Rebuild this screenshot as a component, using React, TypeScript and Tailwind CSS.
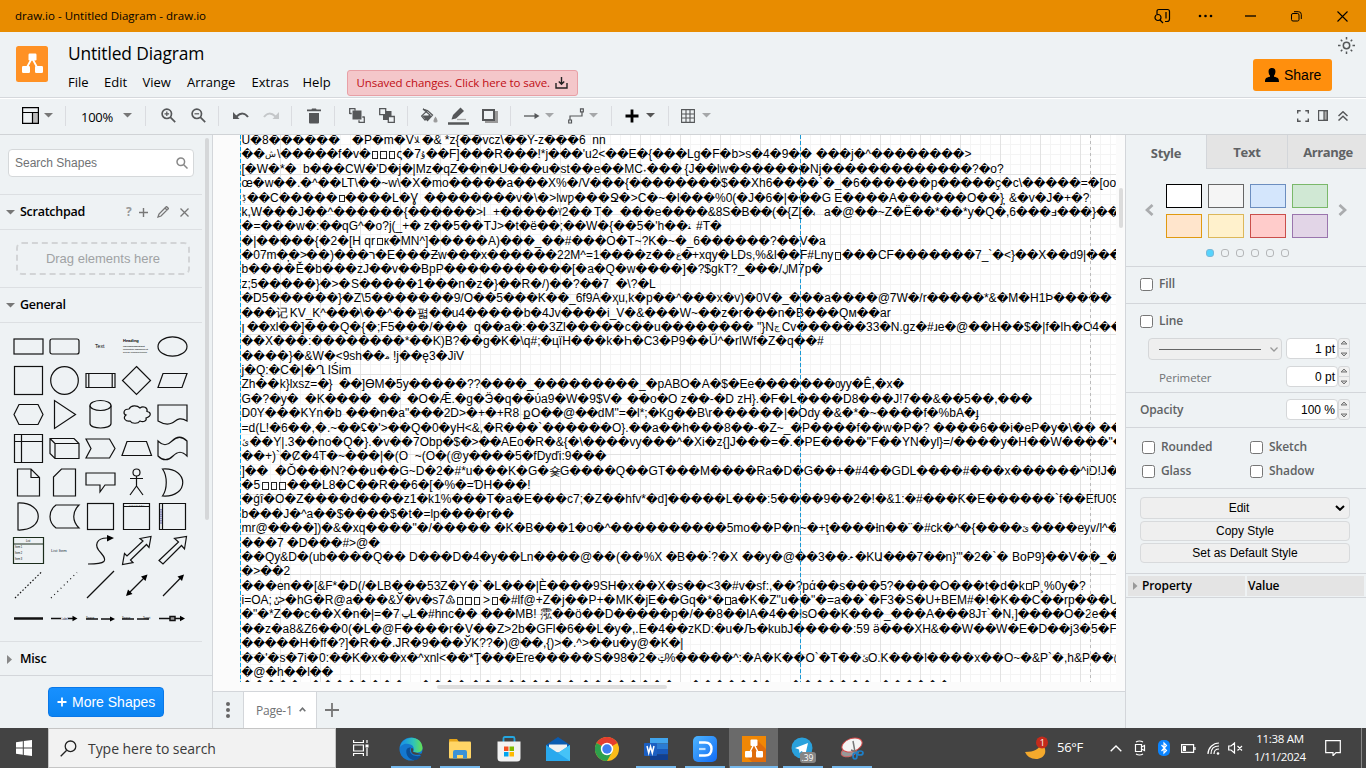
import React from "react";

const ui = "font-['Open_Sans','Noto_Sans',sans-serif]";
const arial = "font-['Liberation_Sans',Arial,sans-serif]";

/*
 * Label text of the imported binary shape. Each line is a list of segments
 * separated by "‖", every segment being "x¦text". "§" plus a letter stands for
 * a run of replacement characters (a = 1, b = 2, ...).
 */
const LINES: string[] = [
  "241.5¦U§a8§f‖352¦§aP§am§aV‖414¦ﻼ‖422¦§a& *z{§bvcz\\§b‖527¦Y-z§c6  nn",
  "241.5¦§b‖265¦ش‖277¦\\§ef§av§a‖370.5¦□□□‖396.5¦ς§a7‖421¦ۇ‖426¦§b‖449¦F]§cR§c!*j§c'‖585¦u2<§bE§a{§c‖687¦Lg§aF§ab>s§a4§a9§b‖816¦§c‖851¦j§a^§h>",
  "241.5¦[§aW§a*§a ‖303¦b§c‖345¦CW§a'D§aj§a|‖415.7¦Mz§aqZ§bn§aU§c‖542¦u§ast§be§bMC˖§c‖684.5¦{J§b‖717¦lw§g‖810¦Nj§m‖972¦?§ao?",
  "241.5¦œ§aw§b.§a^§bLT\\§b~w\\§aX§a‖432¦mo§ea§c‖548¦X%§a/V§c‖625¦{§h‖721¦$§b‖751¦Xh6§d‖819¦`§a_§a‖853¦6§f‖930.7¦p§e‖995¦ҫ§ac\\§e‖1080.7¦=§a[oo",
  "241.5¦ڋ‖247¦§b‖270¦C§e‖337.5¦□‖345¦§d‖392¦L§aƔ‖424¦§h‖516¦v§a\\§a>lwƿ§cՋ§a‖630.7¦>C§a~§al§c‖715¦%0(§aJ§a6§a|§c‖821.7¦G E§d‖889¦A§f‖967¦O§b}̦ ‖1009¦&§av§aJ§a+§a?",
  "241.5¦k,W§c‖298¦J§b^§f‖403.7¦{§f‖476¦>l‖493¦+§e‖558¦ᵞ2§b‖594¦T§a ‖620¦§ce§d‖707.7¦&8S§aB§b(§a{Z[§a‖813¦ﺑ‖824¦a§a@§b~Z§aË§b*§b‖963¦*y§aQ§a‖1006¦,6§cⅎ§c}§b",
  "241.5¦§a=§c‖296¦w§a:§b‖342¦qG^§ao?j(_+§a‖423.7¦z§b5§b‖483.7¦TJ>§at§aë§b;§b‖586¦W§a{§b5§a'h§b‖688¦ﻨ‖696¦#T§a",
  "241.5¦§a|§e‖314.7¦{§a2§a‖349¦[H qr‖375.7¦□‖383.7¦к§aMN^]§e‖488¦A)§c_§b#§cO§aT~?K§a‖668¦~§a‖686.7¦_6§f‖770¦?§bV§a‖819¦a",
  "241.5¦§a07m§a̦§a‖300¦>‖306¦§b‖330¦)§cר§a‖387¦E§c‖430.7¦Ƶw§c‖481¦x§f‖557¦22M^=1§d‖645.7¦z§b‖675.7¦ع‖681¦§a‖692¦+xqу§a‖730.7¦LDs,%&l§b‖800¦F#Lny‖834¦□‖842¦§c‖878¦CF§g‖975¦7_`§a‖1004¦<}§bX§bd9|§c",
  "241.5¦b§d‖295.7¦Ě§ab§c‖357¦zJ§bv§b‖421¦BpP§k‖572¦[§aa§aQ§aw§d]‖686¦§a‖697.7¦?$gkT?_§c/‖782¦ڸ‖788¦M7p§a",
  "241.5¦z;5§e‖315.7¦}§a>§a‖351¦S§e‖417¦1§cn§az§a‖494¦}§bR§a/)§b‖573¦?§b7  ‖615.7¦§a\\?§aL",
  "241.5¦§aD5§f‖338¦}§aZ\\5§g‖453.7¦9/O§b5§cK§b‖569¦_6f9A§aҳu,k§a‖646¦p§b^§c‖716.7¦x§av)§a‖756¦0V§a_§ca§d‖877.7¦@7W§a/r§e‖984¦*&§aM§aH1Þ§e",
  "241.5¦§c‖276¦记‖289.7¦KV_K^§c‖360¦\\§b^§b‖417¦펿‖429¦§a‖441¦§a‖451.7¦u4§e‖523.7¦b§a4Jv§d‖607¦i_V§a&§cW‖691¦~§bz§ar§cn§a‖796¦B§cQм§bar",
  "241.5¦ן‖247¦§bxl§b‖301¦]§cQ§a{§a‖377¦;F5§c/§c  ‖474¦q§ba§a:§b‖549¦3Zl§e‖624.7¦c§bu§h ‖757¦\"}N‖774¦ج‖781.7¦Cv§f‖866¦33§aN.gz§a#ɹe§a‖956¦@§bH§b$§a|f§alҺ§a‖1083¦O4§b",
  "241.5¦§bX§c‖308¦:§h‖404.7¦*§bK)B?§b‖483¦g§aK§a\\q#;§a‖552¦цïH§ck§aҺ§aC3§aP9§b‖709¦Ű^§arlWf§aZ§aq§b#",
  "241.5¦§d}§a&W§a‖335.7¦<9sh§b‖384.7¦ﻣ‖393¦!j§bę3§aJiV",
  "241.5¦j§aQ:§aC§a|§aՂ ‖328¦lŚim",
  "241.5¦Zh§b‖279.7¦k}lxsz=§a}  ‖339¦§b]ӨM§a‖396¦5у§e‖467¦??§d‖527¦_§i‖639¦_§apABO§a‖701.7¦A§a$§aEe§g‖835¦ѹy§aÊ,§ax§a",
  "241.5¦G§a?§ay§a  ‖305¦§aK§d  ‖378¦§b  ‖407¦§aO§aǢ.§ag§aӬ§aq§bύa9§a‖566¦W§a9$V§a ‖627¦§bo§aO z§b-§aD zH}.§a‖770.7¦F§aL§dD8§cJ!7§b‖932.7¦&§b5§b,§c",
  "241.5¦D0Y§cKYn§ab ‖345.7¦§cn§aa\"§c‖443.7¦2D>§a+§a+R8 ‖523¦քO§b@§bdM\"=§al*;§a‖659¦Kg§b‖697¦B\\r§f‖784¦|§aOdy ‖822¦§a&§a*§a~§df§a%bA§aɟ",
  "241.5¦=d(L!§a6§b,§a‖327¦.~§bʢ§a'>§b‖411¦Q§a0§ayH<&,§a‖494.7¦R§c`§f‖612¦O}.§ba§bh§c‖724¦8§b-§aZ~_§a‖802¦P§df§bw§aP§a? ‖933¦§d6§bi§aeP§ay§a\\§b ‖1099¦§b",
  "241.5¦ئ‖249.7¦§bY|.3§b‖318¦no§aQ§a}.§av§b‖413¦7Obp§a$§a>§b‖501¦AEo§aR§a&{§a\\§dvy§c^§a‖694¦Xi§az{]J§c‖771¦=§a.§aPE§d‖866.7¦\"F§bYN§ayl}=/§d‖1000.7¦y§aH§bW§d\"§a",
  "241.5¦§b+)`§aȻ§a4T§a‖338¦~§c|§a(O  ‖414.7¦~(O§a(@y§d‖515¦5§afDyďi:9§c",
  "241.5¦]§b  ‖275¦§aǑ§cN?§bu§bG~D§a‖436¦2§a#*u§cK§aG§a‖549¦숓‖560¦G§dQ§bGT§c‖700¦M§dRa§aD§aG§b+§a‖855¦#4§bGDL§d‖962.7¦#§cx§f^iD!J§a",
  "241.5¦§a5‖261.3¦□□□‖287¦§cL8§aC§bR§b‖411¦6§a[§a%§a=ƊH§c!",
  "241.5¦§aǵî§aO§aZ§d‖350.7¦d§d‖403.7¦z1§ak1%§cT§aa§aE§c‖567¦c7;§aZ§bhfv*§ad]§e‖725.7¦L§c:5§d9§b2§a!§a&1:§a‖916¦#§cƘ§aE§f‖1055¦`f§bEfU09",
  "241.5¦b§cJ§a^a§b$§d‖390¦$§at§a=lp§dr§b",
  "241.5¦mr@§d‖314¦])§a&§axq§d\"§a/§e ‖494¦§aK§aB§c1§ao§a‖604.7¦^§j‖726.7¦5mo§bP§an~§a+ţ§d‖875.7¦ƚn§b¨§a#ck§a^§a{§d‖1022¦ێ‖1030.7¦§deyv/l^§a",
  "241.5¦§c7 ‖287¦§aD§c#>@§a",
  "241.5¦§bQy&D§a(ub§dQ§b ‖409¦D§cD§a4§ay§bLn§d‖580¦@§b(§b%X ‖665.7¦§aB§b‖708¦˸?§aX ‖742¦§by§a@§b3§b‖847.7¦ލ‖855¦§aKԱ§c7§bn}\"'§a‖974¦2§a`§a ‖1012¦BoP9}§bV§b_§a",
  "241.5¦§a>§b2",
  "241.5¦§cen§b[&F*§aD(/§aLB§c‖427¦53Z§aY§a`§aL§c|È§d‖593¦9SH§ax§bX§as§b‖706.7¦<3§a#v§asf:,§b?pά§bs§c5?§d‖940¦O§ct§ad§ak‖1025¦□‖1032¦P¸%0y§a?",
  "241.5¦i=OA;‖273.5¦ݨ‖278¦>§ahG§aR@a§c‖388¦&Ў§av§as7‖445¦♳‖455.7¦□□□‖483¦>‖491¦□‖499¦§a#lf@+Z§aj§bP+§a‖615.7¦MK§ajE§bGq§a*§a‖724¦□‖731¦a§aK§aZ\"u§b\"§a=a§b`§a‖880¦F3§aS§aU+BEM#§a!§aK§bC§brp§cU",
  "241.5¦§a\"§a*Z§bc§bX§an§a‖371¦|=§a7‖400.7¦ݐ‖409.7¦L§a#hnc§b ‖480.7¦§cMB! ‖540¦霐‖552¦§bö§bD§e‖671¦p§a/§b8§blA§a4§blsO§bK§c_§c‖926¦A§c8Jт`§aN,]§d‖1064¦O§a2e§b",
  "241.5¦§bz§aa8&Z6§b0(§aL§a‖382¦@F§dr§aV§b‖497¦Z>2b§aGFl§a6§bL§ay§a‖632¦,.E§a4§bzKD:§au§aЉ§a‖768¦kubJ§e‖853¦:59 ӛ§cXH&§bW§bW§aE§aD§b‖1070¦j3§a5§aF",
  "241.5¦§eH§aff§a?]§aR§b‖392¦.JR§a9§c‖463.7¦ЎK??§a)@§b‖543¦,{)>§a.^>§bu§ay@§aK§a|",
  "241.5¦§b'§as§a7i§a‖319¦0:§bK§ax§bx§a^xnl<§b‖469¦*Ţ§c‖515.7¦Ere§e‖593.7¦S§a98§a2§a‖657¦ݓ‖664.7¦%§e‖733¦^:§aA§aK§bO`§aT§b‖861.7¦ئ‖868¦O.K§cl§dx§bO~§a&P`§a‖1064¦,h&P§b@",
  "241.5¦§a@§ah§bl§b",
  "241.5¦§e‖310¦§h‖420¦§d‖470¦§i‖580¦§h‖690¦§g‖790¦§g‖880¦§f",
];

const RTL = /[\u0600-\u07bf\ufb50-\ufdff\ufe70-\ufeff]/;

/* Text pieces keep their own width; replacement characters share what is left of the segment. */
function renderText(text: string): React.ReactNode[] {
  const out: React.ReactNode[] = [];
  let plain = "";
  const flush = (key: number) => {
    if (plain)
      out.push(
        <span key={`t${key}`} className={RTL.test(plain) ? "flex-none text-[9px]" : "flex-none"}>
          {plain}
        </span>
      );
    plain = "";
  };
  for (let i = 0; i < text.length; i++) {
    const ch = text[i];
    if (ch === "§") {
      flush(i);
      const n = text.charCodeAt(++i) - 96;
      for (let k = 0; k < n; k++)
        out.push(
          <span key={`${i}-${k}`} className="min-w-[11px] max-w-[11.9px] flex-[1_1_11.5px] font-['DejaVu_Sans'] text-[11.4px] leading-[14px]">
            {"\ufffd"}
          </span>
        );
    } else if (ch === "□") {
      flush(i);
      out.push(<span key={i} className="mx-px mt-[4px] h-[7.500px] w-[6.500px] flex-none border border-[#222]" />);
    } else plain += ch;
  }
  flush(text.length);
  return out;
}

function GarbledLabel() {
  return (
    <div className={`${arial} h-full overflow-hidden pl-[1.5px] text-[12px] leading-[14.4px] text-black`}>
      <div className="-mt-[2px]">
        {LINES.map((line, i) => {
          const segs = line.split("‖").map((s) => {
            const [x, t] = s.split("¦");
            return { x: parseFloat(x), t };
          });
          return (
            <div key={i} className="flex h-[14.39px] whitespace-pre" dir="ltr">
              {segs.map((s, k) => (
                <span
                  key={k}
                  className="flex flex-none items-start"
                  style={{ width: k + 1 < segs.length ? segs[k + 1].x - s.x : undefined }}
                >
                  {renderText(s.t)}
                </span>
              ))}
            </div>
          );
        })}
      </div>
    </div>
  );
}

function Svg({ w, h, children, className = "", sw = 1.3 }: { w: number; h: number; children: React.ReactNode; className?: string; sw?: number }) {
  return (
    <svg width={w} height={h} viewBox={`0 0 ${w} ${h}`} fill="none" stroke="currentColor" strokeWidth={sw} className={`block flex-none ${className}`}>
      {children}
    </svg>
  );
}

function Caret({ className = "text-[#6b6d6f]" }: { className?: string }) {
  return (
    <Svg w={9} h={5} className={className}>
      <path d="M0 0h9L4.5 4.5z" fill="currentColor" stroke="none" />
    </Svg>
  );
}

const Sep = ({ className }: { className: string }) => <div className={`h-5 w-px flex-none bg-[#dadce0] ${className}`} />;

function TitleBar() {
  return (
    <div className={`${ui} flex h-8 items-center bg-[#e88c00] pl-[15px] text-black`}>
      <span className="text-[11.5px] tracking-[0.010px]">draw.io - Untitled Diagram - draw.io</span>
      <div className="ml-auto flex items-center pr-[18px]">
        <Svg w={17} h={17} sw={1.2}>
          <path d="M3 6V3.5Q3 1.5 5 1.5h8.5q2 0 2 2V11q0 2.5-2.5 2.500h-2M12 4v6.500" />
          <circle cx="4" cy="9.500" r="3" />
          <path d="M6 12l3 3" />
        </Svg>
        <Svg w={15} h={4} className="ml-[27px]">
          <g fill="currentColor" stroke="none"><circle cx="2" cy="2" r="1.300" /><circle cx="7.500" cy="2" r="1.300" /><circle cx="13" cy="2" r="1.300" /></g>
        </Svg>
        <Svg w={11} h={2} className="ml-[32px]"><path d="M0 1h11" /></Svg>
        <Svg w={11} h={11} className="ml-[35px]" sw={1}>
          <rect x=".5" y="2.500" width="7.500" height="7.500" rx="1.500" />
          <path d="M3 .7h4.500q2.800 0 2.800 2.800V8" />
        </Svg>
        <Svg w={11} h={11} className="ml-[35px]" sw={1.100}><path d="M.5.5l10 10M10.500.5l-10 10" /></Svg>
      </div>
    </div>
  );
}

function Logo({ className = "" }: { className?: string }) {
  return (
    <svg viewBox="0 0 32 36" className={className}>
      <rect width="32" height="36" rx="2.500" fill="#ff9124" />
      <path d="M16 12L10 23M16 12l6 11" stroke="#fff" strokeWidth="1.800" />
      <g fill="#fff"><rect x="12.500" y="7.500" width="8" height="7" rx="1.200" /><rect x="6" y="20" width="8" height="7" rx="1.200" /><rect x="19" y="20" width="8" height="7" rx="1.200" /></g>
    </svg>
  );
}

function Header() {
  const menus: [string, string][] = [["File", "w-[36px]"], ["Edit", "w-[38.500px]"], ["View", "w-[44.500px]"], ["Arrange", "w-[64.500px]"], ["Extras", "w-[51px]"], ["Help", "w-[44px]"]];
  return (
    <div className={`${ui} flex h-[66px] border-b border-[#d5d8dc] bg-[#eef2f4] text-black`}>
      <Logo className="ml-4 mt-[14px] h-9 w-8" />
      <div className="ml-5 mt-[10px] w-[600px]">
        <div className="h-[24px] text-[17.400px] leading-[23px] tracking-[-0.140px]">Untitled Diagram</div>
        <div className="mt-[3px] flex h-[27px] items-center text-[13px]">
          {menus.map(([m, w]) => <span key={m} className={`${w} flex-none`}>{m}</span>)}
          <div className="flex h-[26px] w-[231px] flex-none items-center rounded-[3px] border border-[#e8a0a6] bg-[#f4c7ca] pl-[9px] text-[11.500px] text-[#c00d14]">
            <span className="w-[198px] whitespace-nowrap tracking-[-0.070px]">Unsaved changes. Click here to save.</span>
            <Svg w={13} h={13} className="text-[#222]" sw={1.400}><path d="M1 7v5h11V7M6.500 1v7M3.800 5.500l2.700 2.800 2.700-2.800" /></Svg>
          </div>
        </div>
      </div>
      <div className="ml-auto flex">
        <div className={`${arial} mt-[27px] flex h-8 w-[79px] items-center rounded-[3px] bg-[#ff8f0d] pl-3 text-[14px]`}>
          <Svg w={14} h={14} className="mr-[5px]"><path d="M7 0c5 0 3.500 6 2 7.500v1.200c4 1 5 1.500 5 5.300H0c0-3.800 1-4.300 5-5.300V7.500C3.500 6 2 0 7 0z" fill="currentColor" stroke="none" /></Svg>
          Share
        </div>
        <Svg w={17} h={17} className="ml-[6px] mr-[11px] mt-[5px] text-[#55585a]" sw={1.500}>
          <circle cx="8.500" cy="8.500" r="3.200" />
          <path d="M8.500 0v2.500M8.500 14.500V17M0 8.500h2.500M14.500 8.500H17M2.800 2.800l1.500 1.500M12.700 12.700l1.500 1.500M14.200 2.800l-1.500 1.500M4.300 12.700l-1.500 1.500" />
        </Svg>
      </div>
    </div>
  );
}

function Toolbar() {
  return (
    <div className="flex h-[37px] items-center border-b border-t border-b-[#d0d3d6] border-t-white bg-[#eef2f4] pb-[2px] pl-[22px] text-[#555759]">
      <Svg w={17} h={17} className="text-black" sw={1.200}><path d="M11 6h5.500v10H11z" fill="#bbb" stroke="none" /><path d="M.6.600h15.800v15.800H.6zM.6 5.500h15.800M10.500 5.500v11" /></Svg>
      <Caret className="ml-[5px] text-[#777]" />
      <Sep className="ml-[12px]" />
      <span className={`${ui} ml-[15px] mt-[5px] w-[34px] text-[13px] tracking-[-0.300px] text-black`}>100%</span>
      <Caret className="ml-[8px] text-[#777]" />
      <Sep className="ml-[13px]" />
      <Svg w={15} h={15} className="ml-[15px]" sw={1.700}><circle cx="5.800" cy="5.800" r="4.700" /><path d="M9.200 9.200l5 5" /><path d="M3.500 5.800h4.600M5.800 3.500v4.600" strokeWidth="1.200" /></Svg>
      <Svg w={15} h={15} className="ml-[15px]" sw={1.700}><circle cx="5.800" cy="5.800" r="4.700" /><path d="M9.200 9.200l5 5" /><path d="M3.500 5.800h4.600" strokeWidth="1.200" /></Svg>
      <Sep className="ml-[12px]" />
      <Svg w={16} h={9} className="ml-[14px]" sw={2}><path d="M3.500 5.500Q10-.5 15 6" /><path d="M0 1v7h6.500z" fill="currentColor" stroke="none" /></Svg>
      <Svg w={16} h={9} className="ml-[14px] text-[#c4c7c9]" sw={2}><path d="M12.500 5.500Q6-.5 1 6" /><path d="M16 1v7H9.500z" fill="currentColor" stroke="none" /></Svg>
      <Sep className="ml-[12px]" />
      <Svg w={14} h={16} className="ml-[15px]"><path d="M0 1.500h4.500L5 .5h4l.5 1H14v1.800H0zM2 5h10v9.500q0 1-1 1H3q-1 0-1-1z" fill="currentColor" stroke="none" /></Svg>
      <Sep className="ml-[13px]" />
      <Svg w={16} h={15} className="ml-[14px]"><path d="M3.500 2.500h9v9h-9z" fill="currentColor" stroke="none" /><path d="M.7 6V.7H6.500M9.500 14.300h5.800V8.500M.7 5.500h2M6 .7v2M10 14.300v-2M15.300 9h-2" /></Svg>
      <Svg w={16} h={15} className="ml-[14px]"><path d="M4 3h8.500v9H4z" fill="currentColor" stroke="none" /><path d="M.7.700h6v6h-6zM9.300 8.500h6v6h-6z" fill="#eef2f4" /></Svg>
      <Sep className="ml-[12px]" />
      <Svg w={17} h={15} className="ml-[13px]" sw={1.200}><path d="M2 1l7 6-5 5-3.500-4L6 3z" /><path d="M1 7.500h11l-5.500 6z" fill="currentColor" stroke="none" /><path d="M2.500 1.500l4 1 5.500 5" /><path d="M14.500 9.500q3 4.500 0 4.500t0-4.500z" fill="#999" stroke="#999" /></Svg>
      <Svg w={21} h={18} className="ml-[10px]"><path d="M3.500 12.500l1.500-4.500L12.500.5l3.500 3.500L8 11.500z" fill="currentColor" stroke="none" /><path d="M9 12.500h9" stroke="#aaa" /><path d="M0 16.500h21" strokeWidth="2.500" /></Svg>
      <Svg w={16} h={14} className="ml-[13px]" sw={2}><path d="M4 3h11v10H4z" fill="#999" stroke="#999" /><path d="M1 1h11v10H1z" fill="#eef2f4" /></Svg>
      <Sep className="ml-[12px]" />
      <Svg w={16} h={6} className="ml-[13px]"><path d="M0 3h12" /><path d="M10.500 0l5 3-5 3z" fill="currentColor" stroke="none" /></Svg>
      <Caret className="ml-[5px] text-[#a5a7a9]" />
      <Svg w={16} h={16} className="ml-[14px]" sw={1.200}><path d="M2 12V8h12V4" /><path d="M.7 12h2.800v3H.7zM12.500.8h2.800v3h-2.800z" /></Svg>
      <Caret className="ml-[5px] text-[#a5a7a9]" />
      <Sep className="ml-[13px]" />
      <Svg w={14} h={14} className="ml-[13px] text-black" sw={2.800}><path d="M7 .5v13M.5 7h13" /></Svg>
      <Caret className="ml-[7px] text-[#555]" />
      <Sep className="ml-[13px]" />
      <Svg w={14} h={14} className="ml-[12px]" sw={1.100}><path d="M.6.600h12.800v12.800H.6zM5 .5v13M9 .5v13M.5 5h13M.5 9h13" /></Svg>
      <Caret className="ml-[7px] text-[#a5a7a9]" />
      <div className="ml-auto flex items-center pr-[18px]">
        <Svg w={12} h={12} sw={1.400}><path d="M.7 3.500V.7h3M8.300.7h3v2.800M11.300 8.500v2.800h-3M3.700 11.300h-3V8.500" /></Svg>
        <Svg w={10} h={11} className="ml-[9px]" sw={1.200}><path d="M6 .6h3.400v9.800H6z" fill="#aaa" /><path d="M.6.600h8.800v9.800H.6z" /></Svg>
        <Svg w={10} h={10} className="ml-[10px]" sw={1.500}><path d="M.5 5L5 .8 9.500 5M.5 9.500L5 5.300l4.500 4.200" /></Svg>
      </div>
    </div>
  );
}

const tiny = "font-['Liberation_Sans']";
const SHAPES: React.ReactNode[] = [
  <rect x="4" y="10" width="29" height="15" />,
  <rect x="4" y="10" width="29" height="15" rx="2" />,
  <text x="13" y="19" fontSize="5.200" fill="#000" stroke="none" className={tiny}>Text</text>,
  <g stroke="none" fill="#000"><text x="5" y="13.300" fontSize="4" fontWeight="bold" className={tiny}>Heading</text><text x="5" y="18" fontSize="2.400" textLength="22" className={tiny}>Lorem ipsum dolor sit amet,</text><text x="5" y="21" fontSize="2.400" textLength="25" className={tiny}>consectetur adipisicing elit</text><text x="5" y="24" fontSize="2.400" textLength="24" className={tiny}>sed do eiusmod tempor</text></g>,
  <ellipse cx="18.500" cy="17.500" rx="14.500" ry="9.700" />,
  <rect x="4.500" y="3.500" width="28" height="28" />,
  <circle cx="18.500" cy="17.500" r="13.800" />,
  <path d="M4 10.500h29v14H4zM6.800 10.500v14M30.200 10.500v14" />,
  <path d="M18.500 3.500l14 14-14 14-14-14z" />,
  <path d="M9 10.500h24l-5 14H4z" />,
  <path d="M9 7.500h19l5 10-5 10H9l-5-10z" />,
  <path d="M8.500 3.500v28l21-14z" />,
  <g><path d="M8 8.500v18c0 6 21 6 21 0v-18" /><ellipse cx="18.500" cy="8.500" rx="10.500" ry="5" /></g>,
  <path d="M11 12c-6 0-6 5-3 6-4 3 0 7 4 6 2 3 8 3 10 0 4 2 7-1 6-3 6-2 5-6 1-6.500 1-4-4-6-7-3.500-3-3-9-3-11 1z" />,
  <path d="M4 8h29v16c-8-5-11 0-15 2-4 2-9 1-14-2z" />,
  <path d="M4.500 3.500h28v28h-28zM4.500 10.500h28M11.500 3.500v28" />,
  <path d="M4 7.500h24l5 5v15H9l-5-5zM4 7.500l5 5v15M9 12.500h24" />,
  <path d="M4 8h23.500l5.500 9.500-5.500 9.500H4l5-9.500z" />,
  <path d="M9 10.500h19.500l5 14H4z" />,
  <path d="M4 10c5 5 9 5 14 0s10-5 15 0v15c-5-5-9-5-14 0s-10 5-15 0z" />,
  <path d="M7.500 4H21l8.500 8.500V31h-22zM21 4v8.500h8.500" />,
  <path d="M15.500 4h14v27h-22V12z" />,
  <path d="M4 8h29v12H23l-5 7v-7H4z" />,
  <g><circle cx="18.500" cy="7.500" r="3.500" /><path d="M18.500 11v10M12 13.500h13M18.500 21l-6.500 9M18.500 21l6.500 9" /></g>,
  <path d="M8.500 4c5 7 5 20 0 27 27 2 27-29 0-27z" />,
  <path d="M8 4c27-1 27 28 0 27z" />,
  <path d="M10 6h23c-7 7-7 16 0 23H10c-8-6-8-17 0-23z" />,
  <rect x="5.500" y="4.500" width="26" height="26" />,
  <g><path d="M5.500 4.500h26v26h-26zM5.500 7.500h26" /><text x="11" y="7" fontSize="2.400" fill="#000" stroke="none" textLength="15" className={tiny}>Vertical</text></g>,
  <g><path d="M5.500 4.500h26v26h-26zM8.500 4.500v26" /><path d="M7 10v15" stroke="#505099" strokeDasharray="1.500 .7" /></g>,
  <g><path d="M3.500 4.500h30v26h-30zM3.500 11h30" stroke="#1b2c1b" /><text x="16" y="9" fontSize="2.800" fill="#000" stroke="none" className={tiny}>List</text><g fontSize="2.600" fill="#000" stroke="none" className={tiny}><text x="5" y="15">Item 1</text><text x="5" y="21">Item 2</text><text x="5" y="27">Item 3</text></g></g>,
  <text x="5" y="18.500" fontSize="4.200" fill="#234" stroke="none" className={tiny}>List Item</text>,
  <g><path d="M6 31c18 0 20-3 13-11-8-8-4-15 6-15h3" /><path d="M25 2l7 3-7 3.500z" fill="#000" stroke="none" /></g>,
  <path d="M4.500 31.500l2-11 2.500 2.500L25 8l-3-2.500 11-2-2 11-2.500-3L12.500 27l2.500 2.500z" />,
  <path d="M5 27.500L24.500 9l-4-3.500 12-2-2 12.500-3-3.500L9 31z" />,
  <path d="M5 31L32 4.500" strokeDasharray="1.500 2" />,
  <path d="M5 31L31 5.500" strokeDasharray="1 3.500" />,
  <path d="M5 31L32 4" />,
  <g><path d="M9.500 27.500L28 9" /><path d="M8 29l2-6.500L14.500 27zM29.500 7.500L23 9.500 27.500 14z" fill="#000" stroke="none" /></g>,
  <g><path d="M9 29L28 9.500" /><path d="M30 7.500L23.500 9.500 28 14z" fill="#000" stroke="none" /></g>,
  <path d="M4 17.500h29" strokeWidth="2.500" />,
  <g><path d="M5 17.500h10M22 17.500h6" strokeWidth="1.500" /><path d="M26.500 14.800l5 2.700-5 2.700z" fill="#000" stroke="none" /><text x="15.500" y="18.800" fontSize="2.600" fill="#113" stroke="none" className={tiny}>Label</text></g>,
  <g><path d="M4 18h12M19 18h10" strokeWidth="1.500" /><path d="M28 15.400l5 2.600-5 2.600z" fill="#000" stroke="none" /><text x="4" y="17.500" fontSize="2.600" fill="#000" stroke="none" className={tiny}>Source</text></g>,
  <g><path d="M4 18h12M19 18h12" strokeWidth="1.500" /><text x="4" y="17.500" fontSize="2.600" fill="#000" stroke="none" className={tiny}>Source</text><text x="25" y="17.500" fontSize="2.600" fill="#000" stroke="none" className={tiny}>Target</text></g>,
  <g><path d="M5 17.500h24" strokeWidth="1.500" /><path d="M16 15.500h5v4h-5z" fill="#999" strokeWidth="1.500" /><path d="M26 14.800l5 2.700-5 2.700z" fill="#000" stroke="none" /></g>,
];

function Sidebar() {
  return (
    <div className={`${ui} flex w-[213px] flex-none border-r border-[#d3d6da] bg-[#eef2f4]`}>
      <div className="flex w-full flex-col">
        <div className="flex h-[540px]">
          <div className="w-[202px]">
            <div className="h-[60px] border-b border-[#dcdfe2] pl-2 pt-[14px]">
              <div className={`${arial} flex h-7 w-[186px] items-center rounded-[4px] border border-[#d5d8da] bg-white pl-[6px] text-[12px] text-[#707274]`}>
                <span className="w-[161px]">Search Shapes</span>
                <Svg w={12} h={12} className="text-[#888]" sw={1.500}><circle cx="4.800" cy="4.800" r="3.800" /><path d="M7.500 7.500l4 4" /></Svg>
              </div>
            </div>
            <div className="flex h-[35px] items-center border-b border-[#dcdfe2] pl-[6px] text-[12.500px] font-semibold text-black">
              <Caret className="text-[#777]" />
              <span className="ml-[5px] w-[106px] tracking-[-0.270px]">Scratchpad</span>
              <span className="w-[13px] text-[12px] font-bold text-[#999]">?</span>
              <Svg w={9} h={9} className="text-[#777]" sw={1.400}><path d="M4.500 0v9M0 4.500h9" /></Svg>
              <Svg w={12} h={12} className="ml-[9px] text-[#777]"><path d="M1 11l1-3 6-6 2 2-6 6zM8.500 1.500l1-1 2 2-1 1" /></Svg>
              <Svg w={9} h={9} className="ml-[11px] text-[#777]"><path d="M.5.500l8 8M8.500.5l-8 8" /></Svg>
            </div>
            <div className="h-[58px] border-b border-[#dcdfe2] pl-4 pt-[12px]">
              <div className={`${arial} flex h-[33px] w-[174px] items-center justify-center rounded-[6px] border-2 border-dashed border-[#d2d4d6] text-[13px] text-[#a0a2a4]`}>Drag elements here</div>
            </div>
            <div className="flex h-[35px] items-center border-b border-[#dcdfe2] pl-[6px] pt-[1px] text-[12.500px] font-semibold text-black">
              <Caret className="text-[#777]" />
              <span className="ml-[5px] tracking-[-0.270px]">General</span>
            </div>
            <div className="grid h-[319px] grid-cols-[repeat(5,36px)] content-start border-b border-[#dcdfe2] pl-[10px] pt-[6px]">
              {SHAPES.map((s, i) => (
                <svg key={i} width="36" height="34" viewBox="0 0 36 34" fill="none" stroke="#111" strokeWidth="1.200" className="block">{s}</svg>
              ))}
            </div>
            <div className="flex h-[33px] items-center pl-[7px] pt-[2px] text-[12.500px] font-semibold text-black">
              <Svg w={5} h={9} className="text-[#888]"><path d="M0 0v9l5-4.500z" fill="currentColor" stroke="none" /></Svg>
              <span className="ml-2 tracking-[-0.200px]">Misc</span>
            </div>
          </div>
          <div className="ml-[3px] mt-[3px] h-[382px] w-1 rounded bg-[#d5d7d9]" />
        </div>
        <div className="flex-1 border-t border-[#d3d6da] pl-12 pt-[11px]">
          <div className={`${arial} flex h-[30px] w-[116px] items-center rounded-[4px] border border-[#0a78e8] bg-gradient-to-b from-[#1790ff] to-[#0a84f2] pl-2 text-[14px] text-white`}>
            <Svg w={10} h={10} className="mr-[5px]" sw={1.800}><path d="M5 .5v9M.5 5h9" /></Svg>
            <span className="whitespace-nowrap">More Shapes</span>
          </div>
        </div>
      </div>
    </div>
  );
}

function Canvas() {
  return (
    <div className="flex w-[913px] flex-none flex-col border-r border-[#d3d6da]">
      <div className="relative flex h-[557px] flex-col border-b border-[#d3d6da] bg-[#fbfbfb]">
        <div className="flex h-[547px]">
          <div className="w-[27px] flex-none" />
          <div className="relative h-[547px] w-[876px] flex-none bg-white bg-[linear-gradient(to_right,#e2e2e2_1px,transparent_1px),linear-gradient(to_bottom,#e2e2e2_1px,transparent_1px),linear-gradient(to_right,#f4f4f4_1px,transparent_1px),linear-gradient(to_bottom,#f4f4f4_1px,transparent_1px)] bg-[size:40px_40px,40px_40px,10px_10px,10px_10px] bg-[position:0_-1px,0_-1px,0_-1px,0_-1px]">
            <GarbledLabel />
            <div className="absolute inset-y-0 left-0 w-px bg-[repeating-linear-gradient(to_bottom,#00a8f0_0_4px,transparent_4px_6px)]" />
            <div className="absolute inset-y-0 left-[560px] w-px bg-[repeating-linear-gradient(to_bottom,#1a9ad6_0_4px,transparent_4px_6px)]" />
            <div className="absolute inset-y-0 left-[850px] w-px bg-[repeating-linear-gradient(to_bottom,#bbb_0_3px,transparent_3px_6px)]" />
          </div>
          <div className="ml-[3px] mt-[53px] h-10 w-1 rounded bg-[#dcdcdc]" />
        </div>
        <div className="ml-[224px] mt-[3px] h-1 w-[230px] rounded bg-[#dedede]" />
      </div>
      <div className={`${ui} flex h-[36px] items-center bg-[#eef2f4] text-[#707274]`}>
        <div className="flex w-[30px] flex-col items-center gap-[2px]">
          <i className="h-1 w-1 rounded-full bg-[#666]" /><i className="h-1 w-1 rounded-full bg-[#666]" /><i className="h-1 w-1 rounded-full bg-[#666]" />
        </div>
        <div className="flex h-full w-[74px] items-center border-x border-[#d3d6da] bg-white pl-3 pt-[1px] text-[12px] tracking-[-0.200px]">
          <span className="w-[43px] font-medium">Page-1</span>
          <Svg w={7} h={5} className="-mt-[2px]" sw={1.600}><path d="M.7 4.300L3.500 1.200l2.800 3.100" /></Svg>
        </div>
        <Svg w={14} h={14} className="ml-2 text-[#777]" sw={1.800}><path d="M7 0v14M0 7h14" /></Svg>
      </div>
    </div>
  );
}

const Check = ({ label, className = "" }: { label: string; className?: string }) => (
  <div className={`flex items-center ${className}`}>
    <i className="h-[13px] w-[13px] flex-none rounded-[2.500px] border border-[#767676] bg-white" />
    <span className="ml-[6px] text-[12px] font-semibold tracking-[-0.100px] text-[#606264]">{label}</span>
  </div>
);

function Spinner({ value }: { value: string }) {
  return (
    <div className={`${arial} flex h-[22px] text-[12px] text-black`}>
      <div className="flex h-[21px] w-[52px] items-center justify-end rounded-[4px] border border-[#d5d7d9] bg-white pr-[2px]">{value}</div>
      <div className="flex h-[21px] w-[12px] flex-col items-center justify-around rounded-[3px] border border-[#d5d7d9] bg-[#f0f0f0]">
        <Svg w={8} h={5} className="text-[#777]" sw={1}><path d="M1 4h6L4 1z" fill="#ccc" /></Svg>
        <div className="h-px w-full bg-[#d5d7d9]" />
        <Svg w={8} h={5} className="text-[#777]" sw={1}><path d="M1 1h6L4 4z" fill="#ccc" /></Svg>
      </div>
    </div>
  );
}

function FormatPanel() {
  const swatches = [
    "border-black bg-white", "border-[#666] bg-[#f5f5f5]", "border-[#6c8ebf] bg-[#d4e6fc]", "border-[#7ab86a] bg-[#d0e8d4]",
    "border-[#e09a10] bg-[#ffe5cc]", "border-[#dcb75a] bg-[#fff1cc]", "border-[#c94f4b] bg-[#ffcccb]", "border-[#9a75ad] bg-[#e2d5e7]",
  ];
  const btn = "flex w-[210px] items-center justify-center rounded-[4px] border border-[#d8dadc] bg-[#efefef]";
  return (
    <div className={`${ui} flex flex-1 flex-col bg-[#eef2f4]`}>
      <div className="flex h-[34px] text-[13px] font-bold text-[#606264]">
        <div className="flex w-[80px] items-center justify-center pt-[3px] tracking-[-0.300px]">Style</div>
        <div className="flex w-[81px] items-center justify-center border-b border-l border-[#d3d6da] bg-[#e4e4e4] pt-[2px] tracking-[-0.200px]">Text</div>
        <div className="flex w-[79px] items-center justify-center border-b border-l border-[#d3d6da] bg-[#e4e4e4] pl-[2px] pt-[2px] tracking-[-0.400px]">Arrange</div>
      </div>
      <div className="h-[98px] border-b border-[#d3d6da]">
        <div className="flex items-center pl-[19px] pt-[15px] text-[#aaacae]">
          <Svg w={9} h={12} className="-mt-[3px]" sw={2.800}><path d="M7.500 1L2 6l5.500 5" /></Svg>
          <div className="ml-3 grid grid-cols-[repeat(4,36px)] gap-x-[6px] gap-y-[6px]">
            {swatches.map((s) => <div key={s} className={`h-6 border ${s}`} />)}
          </div>
          <Svg w={9} h={12} className="-mt-[3px] ml-[10px]" sw={2.800}><path d="M1.500 1L7 6l-5.500 5" /></Svg>
        </div>
        <div className="flex gap-[7px] pl-[80px] pt-[11px]">
          <i className="h-2 w-2 rounded-[3px] border border-[#7bb8d8] bg-[#56d3fc]" />
          {[1, 2, 3, 4, 5].map((n) => <i key={n} className="h-2 w-2 rounded-[3px] border border-[#b4b6b8]" />)}
        </div>
      </div>
      <div className="h-[37px] border-b border-[#d3d6da] pl-[14px] pt-[8px]"><Check label="Fill" /></div>
      <div className="h-[89px] border-b border-[#d3d6da] pt-[8px]">
        <Check label="Line" className="pl-[14px]" />
        <div className="mt-[8px] flex pl-[22px]">
          <div className="mr-[4px] flex h-[22px] w-[134px] items-center rounded-[4px] border border-[#d5d7d9] bg-[#efefef] pl-[10px]">
            <div className="h-px w-[102px] bg-[#666]" />
            <Svg w={8} h={5} className="ml-[9px] text-[#999]"><path d="M.5.500L4 4 7.500.5" /></Svg>
          </div>
          <Spinner value="1 pt" />
        </div>
        <div className="mt-[6px] flex pl-[33px]">
          <span className="w-[127px] text-[11.500px] leading-[23px] tracking-[-0.100px] text-[#707274]">Perimeter</span>
          <Spinner value="0 pt" />
        </div>
      </div>
      <div className="flex h-[35px] items-center border-b border-[#d3d6da] pl-[14px]">
        <span className="w-[146px] text-[12px] font-semibold tracking-[-0.150px] text-[#606264]">Opacity</span>
        <Spinner value="100 %" />
      </div>
      <div className="grid h-[61px] grid-cols-[108px_100px] grid-rows-[24px_24px] content-start border-b border-[#d3d6da] pl-[16px] pt-[7px]">
        <Check label="Rounded" /><Check label="Sketch" /><Check label="Glass" /><Check label="Shadow" />
      </div>
      <div className={`${arial} h-[85px] border-b border-[#d3d6da] pl-[14px] pt-2 text-[12px] text-black`}>
        <div className={`${btn} h-[22px]`}>
          <span className="flex-1 pr-[12px] text-center">Edit</span>
          <Svg w={10} h={6} className="-ml-[14px] mr-[4px]" sw={2}><path d="M1 1l4 3.800L9 1" /></Svg>
        </div>
        <div className={`${btn} mt-[2px] h-5`}>Copy Style</div>
        <div className={`${btn} mt-[2px] h-5`}>Set as Default Style</div>
      </div>
      <div className="flex h-[24px] items-center gap-[2px] border-b border-[#d3d6da] px-[2px] text-[12px] font-semibold text-black">
        <div className="flex h-[20px] w-[117px] items-center bg-[#e4e4e4] pl-[5px]">
          <Svg w={5} h={8} className="text-[#999]"><path d="M0 0v8l4.500-4z" fill="currentColor" stroke="none" /></Svg>
          <span className="ml-1 tracking-[-0.100px]">Property</span>
        </div>
        <div className="flex h-[20px] flex-1 items-center bg-[#e4e4e4] pl-[1px] tracking-[-0.200px]">Value</div>
      </div>
    </div>
  );
}

const APPS: { line: string; active?: boolean; icon: React.ReactNode }[] = [
  { line: "w-10", icon: <svg width="24" height="26" viewBox="0 0 26 26"><defs><linearGradient id="e1" x1="0" y1="0" x2="1" y2="0"><stop offset=".2" stopColor="#1c9be0" /><stop offset=".6" stopColor="#30c3b8" /><stop offset="1" stopColor="#66e24e" /></linearGradient></defs><circle cx="13" cy="13" r="12.500" fill="#1478cf" /><path d="M1 12C3-3 25-3 25.500 12c0 5-7 6-10 4 1-2 1-6-2.500-7.500C8 6 2 8 1 12z" fill="url(#e1)" /><path d="M8 14c-1 6 4 11 9 11 3 0 6-3 7-5-5 2-11 0-12-4-.6-2 0-4 1-5-2 0-4.500 1-5 3z" fill="#0c4f96" /><path d="M13.500 12c2 0 2.500 1.500 1.500 4l9 2.500 2-2v4l-4-1.500c-5 1-9-1-9-4.500 0-1 0-2 .5-2.500z" fill="#434343" /></svg> },
  { line: "w-10", icon: <svg width="22" height="20" viewBox="0 0 22 20"><path d="M0 1q0-1 1-1h7l2 3H0z" fill="#e5a419" /><rect y="2.500" width="22" height="17" rx="1" fill="#ffd566" /><path d="M4 19.500V13q0-2 2-2h10q2 0 2 2v6.500h-4V16H8v3.500z" fill="#3c92d8" /></svg> },
  { line: "w-0", icon: <svg width="24" height="26" viewBox="0 0 24 26"><path d="M6.500 7V2.500q0-1.500 1.500-1.500h8q1.500 0 1.500 1.500V7" fill="none" stroke="#24a6e0" strokeWidth="1.800" /><path d="M.5 5.500h23V22q0 3.500-3.500 3.500H4Q.5 25.500.5 22z" fill="#f2f2f2" /><path d="M7 10.500h4.500V15H7z" fill="#f25022" /><path d="M12.500 10.500H17V15h-4.500z" fill="#7fba00" /><path d="M7 16h4.500v4.500H7z" fill="#00a4ef" /><path d="M12.500 16H17v4.500h-4.500z" fill="#ffb900" /></svg> },
  { line: "w-0", icon: <svg width="24" height="24" viewBox="0 0 24 24"><path d="M0 8l12-8 12 8v8H0z" fill="#0a5bb0" /><path d="M3 7.500h18v8H3z" fill="#f1f1f1" /><path d="M0 8l12 8 12-8v16H0z" fill="#29a9ee" /><path d="M12 16l12-8v16z" fill="#45c3f7" /></svg> },
  { line: "w-0", icon: <svg width="24" height="24" viewBox="0 0 24 24"><circle cx="12" cy="12" r="12" fill="#fbbc18" /><path d="M12 12L1.600 6A12 12 0 0 1 22.400 6z" fill="#e43e2f" /><path d="M12 12L1.600 6A12 12 0 0 0 12 24l5.200-9z" fill="#2da04c" /><circle cx="12" cy="12" r="6.200" fill="#fff" /><circle cx="12" cy="12" r="4.700" fill="#3f7ff0" /></svg> },
  { line: "w-10", icon: <svg width="24" height="24" viewBox="0 0 24 24"><path d="M6 1h18v5.500H6z" fill="#41a5ee" /><path d="M6 6.500h18V12H6z" fill="#2b7cd3" /><path d="M6 12h18v5.500H6z" fill="#185abd" /><path d="M6 17.500h18V23H6z" fill="#103f91" /><rect y="6" width="13" height="13" rx="1" fill="#1b5fc2" /><path d="M3 9l1.700 7L6.500 9.500 8.300 16 10 9" stroke="#fff" strokeWidth="1.500" fill="none" /></svg> },
  { line: "w-10", icon: <svg width="24" height="26" viewBox="0 0 24 26"><defs><linearGradient id="d1" x1="0" y1="0" x2="1" y2="1"><stop stopColor="#4db5ff" /><stop offset="1" stopColor="#126bf5" /></linearGradient></defs><rect width="24" height="26" rx="5" fill="url(#d1)" /><path d="M6 6.500h6q6.500 0 6.500 6.500T12 19.500H6" fill="none" stroke="#fff" strokeWidth="2.400" /><path d="M6 13h6.500" stroke="#bfe0ff" strokeWidth="2.200" /></svg> },
  { line: "w-12", active: true, icon: <svg width="24" height="26" viewBox="0 0 24 26"><rect width="24" height="26" fill="#f08705" /><path d="M15 4l9 9v13H10l-6-6z" fill="#df6c0c" /><path d="M12 8L7 18M12 8l5 10" stroke="#fff" strokeWidth="1.500" /><g fill="#fff"><rect x="8.500" y="3.500" width="7" height="6.500" rx="1" /><rect x="3" y="15" width="7" height="6.500" rx="1" /><rect x="14" y="15" width="7" height="6.500" rx="1" /></g></svg> },
  { line: "w-10", icon: <svg width="26" height="28" viewBox="0 0 26 28"><circle cx="12" cy="13" r="10.500" fill="#2aa1dc" /><path d="M5 13l13-5-2.500 11-4-3-2 2-.5-3.500z" fill="#fff" /><rect x="10" y="17" width="16" height="11" rx="3" fill="#858585" /><text x="11.500" y="26" fontSize="8.500" fill="#fff" className="font-['Open_Sans']">.39</text></svg> },
  { line: "w-10", icon: <svg width="24" height="24" viewBox="0 0 24 24"><ellipse cx="9" cy="15" rx="8" ry="4.500" fill="#999" stroke="#c66" transform="rotate(-15 9 15)" /><ellipse cx="12" cy="8" rx="10.500" ry="6.500" fill="#f4f4f4" stroke="#d64a4a" transform="rotate(-20 12 8)" /><path d="M13 4l2 11M11 13l8 3" stroke="#777" strokeWidth="1.500" /><g fill="none" stroke="#1e7fc8" strokeWidth="1.700"><ellipse cx="15" cy="19" rx="2" ry="3" /><ellipse cx="20" cy="16" rx="3" ry="2" /></g></svg> },
];

function Taskbar() {
  return (
    <div className={`${ui} flex h-10 items-center bg-[#434343] text-white`}>
      <div className="flex w-12 flex-none justify-center">
        <Svg w={16} h={16}><path d="M0 2.300L6.800 1.300V7.500H0zM7.800 1.100L16 0v7.500H7.800zM0 8.500h6.800v6.200L0 13.700zM7.800 8.500H16V16l-8.200-1.100z" fill="#fff" stroke="none" /></Svg>
      </div>
      <div className="flex h-10 w-[288px] flex-none items-center border border-[#c5c5c5] bg-[#f2f2f2] pl-[11px] text-[14px] text-[#3a3a3a]">
        <Svg w={17} h={17} sw={1.300} className="text-[#222]"><circle cx="10.500" cy="6.300" r="5.300" /><path d="M6.700 10.300L.7 16.300" /></Svg>
        <span className="ml-[11px] tracking-[-0.050px]">Type here to search</span>
      </div>
      <div className="flex w-[50px] flex-none justify-center">
        <Svg w={16} h={16} sw={1.200}><path d="M.6 0v2.500h9.800V0M.6 5h9.800v6H.6zM.6 16v-2.500h9.800V16M14 0v3M14 8v8" /><path d="M12.500 4.500h3v3h-3z" fill="currentColor" stroke="none" /></Svg>
      </div>
      {APPS.map((a, i) => (
        <div key={i} className={`flex h-10 w-[49px] flex-none flex-col items-center ${a.active ? "bg-[#6a6a6a]" : ""}`}>
          <div className="flex h-[38px] items-center pt-[3px]">{a.icon}</div>
          <div className={`h-[2px] bg-[#76b9ed] ${a.line}`} />
        </div>
      ))}
      <div className="ml-auto flex items-center">
        <Svg w={24} h={24}><path d="M0 16q14 0 16-9c8 7 4 16-5 16Q3 23 0 16z" fill="#f4a92c" stroke="none" /><circle cx="17" cy="6.500" r="6" fill="#c42b1c" stroke="none" /><text x="14.700" y="10" fontSize="9" fill="#fff" stroke="none" className="font-['Open_Sans']">1</text></Svg>
        <span className="ml-[8px] w-[53px] text-[13px] tracking-[-0.300px]">56°F</span>
        <Svg w={12} h={7} sw={1.400}><path d="M.7 6.300L6 1l5.300 5.300" /></Svg>
        <Svg w={12} h={16} className="ml-[12px]" sw={1.200}><path d="M1.500 4.500h6v7h-6zM7.500 7l3-1.500v5l-3-1.500M2 2q3.500-2 7 0M2 14q3.500 2 7 0" /></Svg>
        <Svg w={12} h={16} className="ml-[12px]" sw={1.200}><rect width="12" height="16" rx="5" fill="#0a84ff" stroke="none" /><path d="M3.500 5l5 5.500L6 13V3l2.500 2.500-5 5.500" /></Svg>
        <Svg w={15} h={9} className="ml-[11px]" sw={1.200}><path d="M.6.600h12v7.800H.6zM14 3v3" /><path d="M2 2h3v5H2z" fill="currentColor" stroke="none" /></Svg>
        <Svg w={13} h={13} className="ml-[11px]" sw={1.200}><path d="M1 12C1 6 6 1 12 1M4 12q0-8 8-8M7 12q0-5 5-5" /><circle cx="11" cy="11.500" r="1.300" fill="currentColor" stroke="none" /></Svg>
        <Svg w={15} h={12} className="ml-[8px]" sw={1.200}><path d="M.7 4H3l3.500-3v10L3 8H.7zM9.500 4l4.500 4.500M14 4L9.500 8.500" /></Svg>
        <div className="ml-[5px] w-[64px] text-center text-[11.500px] leading-[18px]">
          <div className="tracking-[-0.300px]">11:38 AM</div>
          <div className="tracking-[-0.300px]">1/11/2024</div>
        </div>
        <Svg w={16} h={16} className="ml-[13px]" sw={1.200}><path d="M.7.700h14.600v12H11l-3 3v-3H.7z" /></Svg>
        <div className="ml-[20px] h-10 w-px bg-[#888]" />
        <div className="w-[4px]" />
      </div>
    </div>
  );
}

export default function App() {
  return (
    <div className="flex h-[768px] w-[1366px] flex-col overflow-hidden bg-[#eef2f4]">
      <TitleBar />
      <Header />
      <Toolbar />
      <div className="flex h-[593px]">
        <Sidebar />
        <Canvas />
        <FormatPanel />
      </div>
      <Taskbar />
    </div>
  );
}
